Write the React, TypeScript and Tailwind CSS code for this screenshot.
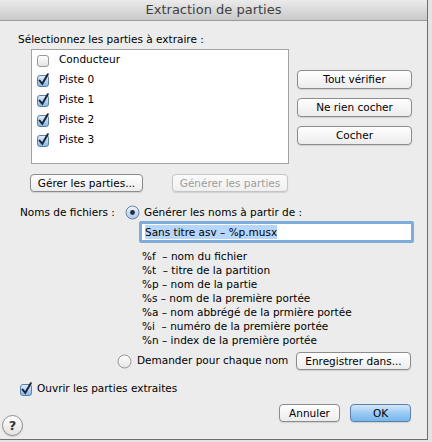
import type { ReactNode } from "react";

function CheckBox({ checked }: { checked: boolean }) {
  return (
    <svg width="14" height="14" viewBox="0 0 14 14" className="shrink-0">
      <defs>
        <linearGradient id="cbOn" x1="0" y1="0" x2="0" y2="1">
          <stop offset="0" stopColor="#e2effc" />
          <stop offset="0.5" stopColor="#b6d4f3" />
          <stop offset="1" stopColor="#86b6e8" />
        </linearGradient>
        <linearGradient id="cbOff" x1="0" y1="0" x2="0" y2="1">
          <stop offset="0" stopColor="#ffffff" />
          <stop offset="1" stopColor="#e2e2e2" />
        </linearGradient>
      </defs>
      <rect
        x="1.5"
        y="2.5"
        width="11"
        height="11"
        rx="2.5"
        fill={checked ? "url(#cbOn)" : "url(#cbOff)"}
        stroke={checked ? "#5b7fa6" : "#9a9a9a"}
      />
      {checked && (
        <path d="M3.6 7.6 L6.3 10.8 L11.8 1.2" stroke="#1d2736" strokeWidth="2" fill="none" strokeLinecap="round" />
      )}
    </svg>
  );
}

function Radio({ on }: { on: boolean }) {
  return (
    <svg width="15" height="15" viewBox="0 0 15 15" className="shrink-0">
      <defs>
        <linearGradient id="rOn" x1="0" y1="0" x2="0" y2="1">
          <stop offset="0" stopColor="#eef5fd" />
          <stop offset="1" stopColor="#a7c8eb" />
        </linearGradient>
        <linearGradient id="rOff" x1="0" y1="0" x2="0" y2="1">
          <stop offset="0" stopColor="#ffffff" />
          <stop offset="1" stopColor="#e4e4e4" />
        </linearGradient>
      </defs>
      <circle cx="7.5" cy="7.5" r="6.5" fill={on ? "url(#rOn)" : "url(#rOff)"} stroke={on ? "#6883a6" : "#999"} />
      {on && <circle cx="7.5" cy="7.5" r="2.4" fill="#1f2c40" />}
    </svg>
  );
}

function Btn({
  children,
  className = "",
  disabled = false,
  primary = false,
}: {
  children: ReactNode;
  className?: string;
  disabled?: boolean;
  primary?: boolean;
}) {
  const skin = primary
    ? "border-[#5f80a8] bg-gradient-to-b from-[#d3e7fb] via-[#9ccaf3] to-[#75b6ee] text-black"
    : disabled
    ? "border-[#c4c4c4] bg-gradient-to-b from-[#fbfbfb] to-[#efefef] text-[#9c9c9c]"
    : "border-[#8c8c8c] bg-gradient-to-b from-[#ffffff] to-[#ececec] text-black";
  return (
    <div
      className={`flex items-center justify-center rounded-[4px] border text-[10.5px] leading-none shadow-[0_1px_1px_rgba(0,0,0,0.12)] ${skin} ${className}`}
    >
      {children}
    </div>
  );
}

const parts = [
  { name: "Conducteur", on: false },
  { name: "Piste 0", on: true },
  { name: "Piste 1", on: true },
  { name: "Piste 2", on: true },
  { name: "Piste 3", on: true },
];

const hints = [
  "%f  – nom du fichier",
  "%t  – titre de la partition",
  "%p – nom de la partie",
  "%s – nom de la première portée",
  "%a – nom abbrégé de la prmière portée",
  "%i  – numéro de la première portée",
  "%n – index de la première portée",
];

export default function App() {
  return (
    <div className="w-[432px] h-[442px] bg-[#e4e4e4] font-['DejaVu_Sans',sans-serif] text-black overflow-hidden">
      <div className="w-[428px] h-[440px] bg-[#ececec] border-r border-b border-[#6e6e6e] flex flex-col">
        <div className="h-[21px] shrink-0 border-b border-[#9a9a9a] bg-gradient-to-b from-[#ebebeb] to-[#c9c9c9] flex items-center justify-center text-[13px] text-[#3f3f3f]">
          Extraction de parties
        </div>

        <div className="ml-[18px] mt-[11px] text-[10.5px] leading-[14px]">Sélectionnez les parties à extraire :</div>

        <div className="flex mt-[3px] ml-[31px]">
          <div className="w-[258px] h-[115px] border border-[#a3a3a3] bg-white">
            {parts.map((p) => (
              <div key={p.name} className="h-[20px] flex items-center pl-[4px]">
                <CheckBox checked={p.on} />
                <span className="ml-[9px] text-[10.5px]">{p.name}</span>
              </div>
            ))}
          </div>
          <div className="ml-[8px] pt-[21px] flex flex-col gap-[9px]">
            <Btn className="w-[115px] h-[19px]">Tout vérifier</Btn>
            <Btn className="w-[115px] h-[19px]">Ne rien cocher</Btn>
            <Btn className="w-[115px] h-[19px]">Cocher</Btn>
          </div>
        </div>

        <div className="flex mt-[10px] ml-[30px]">
          <Btn className="w-[113px] h-[18px]">Gérer les parties...</Btn>
          <Btn disabled className="ml-[29px] w-[116px] h-[18px]">
            Générer les parties
          </Btn>
        </div>

        <div className="flex items-center mt-[13px] ml-[20px] h-[15px] text-[10.5px]">
          <span className="w-[105px]">Noms de fichiers :</span>
          <Radio on />
          <span className="ml-[4px]">Générer les noms à partir de :</span>
        </div>

        <div className="mt-[1px] ml-[139px] w-[275px] h-[22px] rounded-[2px] border-[3px] border-[#80acd9] bg-white flex items-center">
          <span className="ml-[3px] bg-[#b6d6fd] text-[10.5px] leading-[14px]">Sans titre asv – %p.musx</span>
        </div>

        <div className="ml-[142px] mt-[6px] text-[10.5px] leading-[14px] whitespace-pre">
          {hints.map((h) => (
            <div key={h}>{h}</div>
          ))}
        </div>

        <div className="flex items-center mt-[5px] h-[18px] text-[10.5px]">
          <div className="ml-[117px]">
            <Radio on={false} />
          </div>
          <span className="ml-[5px]">Demander pour chaque nom</span>
          <Btn className="ml-auto mr-[16px] w-[115px] h-[18px]">Enregistrer dans...</Btn>
        </div>

        <div className="flex items-center mt-[11px] ml-[19px] h-[15px] text-[10.5px]">
          <CheckBox checked />
          <span className="ml-[4px]">Ouvrir les parties extraites</span>
        </div>

        <div className="flex items-start mt-[8px]">
          <div className="ml-[2px] mt-[11px] w-[21px] h-[21px] rounded-full border border-[#8e8e8e] bg-gradient-to-b from-white to-[#e2e2e2] flex items-center justify-center text-[13px] font-bold text-[#333] shadow-[0_1px_1px_rgba(0,0,0,0.15)]">
            ?
          </div>
          <Btn className="ml-auto w-[61px] h-[18px]">Annuler</Btn>
          <Btn primary className="ml-[10px] mr-[16px] w-[61px] h-[18px]">
            OK
          </Btn>
        </div>
      </div>
    </div>
  );
}
